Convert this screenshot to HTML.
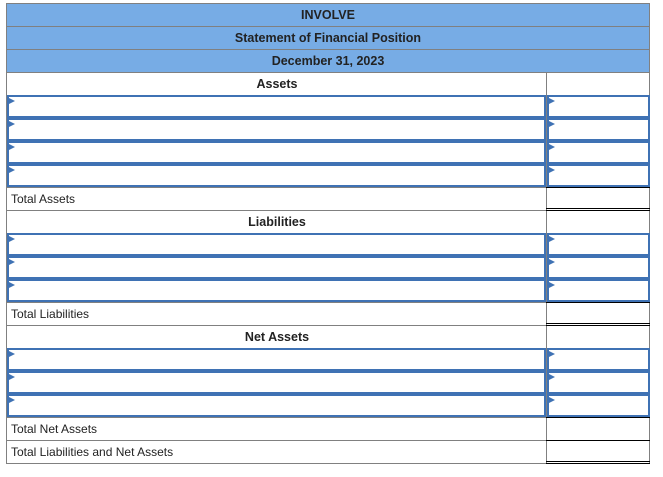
<!DOCTYPE html>
<html><head><style>
body{margin:0;background:#fff;width:663px;height:477px;position:relative;overflow:hidden;font-family:"Liberation Sans",Arial,sans-serif;font-size:12px;color:#222}
.r{position:absolute;left:6px;width:644px;height:23px;border:1px solid #808080;border-bottom:none;box-sizing:border-box}
.h{background:#77ace5;text-align:center;font-weight:bold;line-height:22px;font-size:12.5px}
.d{position:absolute;left:539px;top:0;bottom:0;width:1px;background:#808080}
.sec{text-align:center;font-weight:bold;line-height:22px;font-size:12.5px;width:540px;position:absolute;left:0}
.lab{position:absolute;left:4px;top:0;line-height:23px}
.in{position:absolute;border:2px solid #3f72b4;box-sizing:border-box}
.tri{position:absolute;left:0;top:1px;width:0;height:0;border-left:6px solid #3f72b4;border-top:3px solid transparent;border-bottom:3px solid transparent}
.bl{position:absolute;left:546px;width:104px;height:1px;background:#000}
</style></head><body>
<div class="r h" style="top:3px">INVOLVE</div>
<div class="r h" style="top:26px">Statement of Financial Position</div>
<div class="r h" style="top:49px">December 31, 2023</div>
<div class="r" style="top:72px"><div class="sec">Assets</div><div class="d"></div></div>
<div class="r" style="top:95px"><div class="d"></div></div>
<div class="r" style="top:118px"><div class="d"></div></div>
<div class="r" style="top:141px"><div class="d"></div></div>
<div class="r" style="top:164px"><div class="d"></div></div>
<div class="r" style="top:187px"><div class="lab">Total Assets</div><div class="d"></div></div>
<div class="r" style="top:210px"><div class="sec">Liabilities</div><div class="d"></div></div>
<div class="r" style="top:233px"><div class="d"></div></div>
<div class="r" style="top:256px"><div class="d"></div></div>
<div class="r" style="top:279px"><div class="d"></div></div>
<div class="r" style="top:302px"><div class="lab">Total Liabilities</div><div class="d"></div></div>
<div class="r" style="top:325px"><div class="sec">Net Assets</div><div class="d"></div></div>
<div class="r" style="top:348px"><div class="d"></div></div>
<div class="r" style="top:371px"><div class="d"></div></div>
<div class="r" style="top:394px"><div class="d"></div></div>
<div class="r" style="top:417px"><div class="lab">Total Net Assets</div><div class="d"></div></div>
<div class="r" style="top:440px;height:24px;border-bottom:1px solid #808080"><div class="lab">Total Liabilities and Net Assets</div><div class="d"></div></div>

<div class="in" style="left:7px;top:95px;width:539px;height:23px"><div class="tri"></div></div>
<div class="in" style="left:547px;top:95px;width:103px;height:23px"><div class="tri"></div></div>
<div class="in" style="left:7px;top:118px;width:539px;height:23px"><div class="tri"></div></div>
<div class="in" style="left:547px;top:118px;width:103px;height:23px"><div class="tri"></div></div>
<div class="in" style="left:7px;top:141px;width:539px;height:23px"><div class="tri"></div></div>
<div class="in" style="left:547px;top:141px;width:103px;height:23px"><div class="tri"></div></div>
<div class="in" style="left:7px;top:164px;width:539px;height:23px"><div class="tri"></div></div>
<div class="in" style="left:547px;top:164px;width:103px;height:23px"><div class="tri"></div></div>

<div class="in" style="left:7px;top:233px;width:539px;height:23px"><div class="tri"></div></div>
<div class="in" style="left:547px;top:233px;width:103px;height:23px"><div class="tri"></div></div>
<div class="in" style="left:7px;top:256px;width:539px;height:23px"><div class="tri"></div></div>
<div class="in" style="left:547px;top:256px;width:103px;height:23px"><div class="tri"></div></div>
<div class="in" style="left:7px;top:279px;width:539px;height:23px"><div class="tri"></div></div>
<div class="in" style="left:547px;top:279px;width:103px;height:23px"><div class="tri"></div></div>

<div class="in" style="left:7px;top:348px;width:539px;height:23px"><div class="tri"></div></div>
<div class="in" style="left:547px;top:348px;width:103px;height:23px"><div class="tri"></div></div>
<div class="in" style="left:7px;top:371px;width:539px;height:23px"><div class="tri"></div></div>
<div class="in" style="left:547px;top:371px;width:103px;height:23px"><div class="tri"></div></div>
<div class="in" style="left:7px;top:394px;width:539px;height:23px"><div class="tri"></div></div>
<div class="in" style="left:547px;top:394px;width:103px;height:23px"><div class="tri"></div></div>

<div class="bl" style="top:187px"></div>
<div class="bl" style="top:208px"></div>
<div class="bl" style="top:210px"></div>
<div class="bl" style="top:302px"></div>
<div class="bl" style="top:323px"></div>
<div class="bl" style="top:325px"></div>
<div class="bl" style="top:417px"></div>
<div class="bl" style="top:440px"></div>
<div class="bl" style="top:461px"></div>
<div class="bl" style="top:463px"></div>
</body></html>
